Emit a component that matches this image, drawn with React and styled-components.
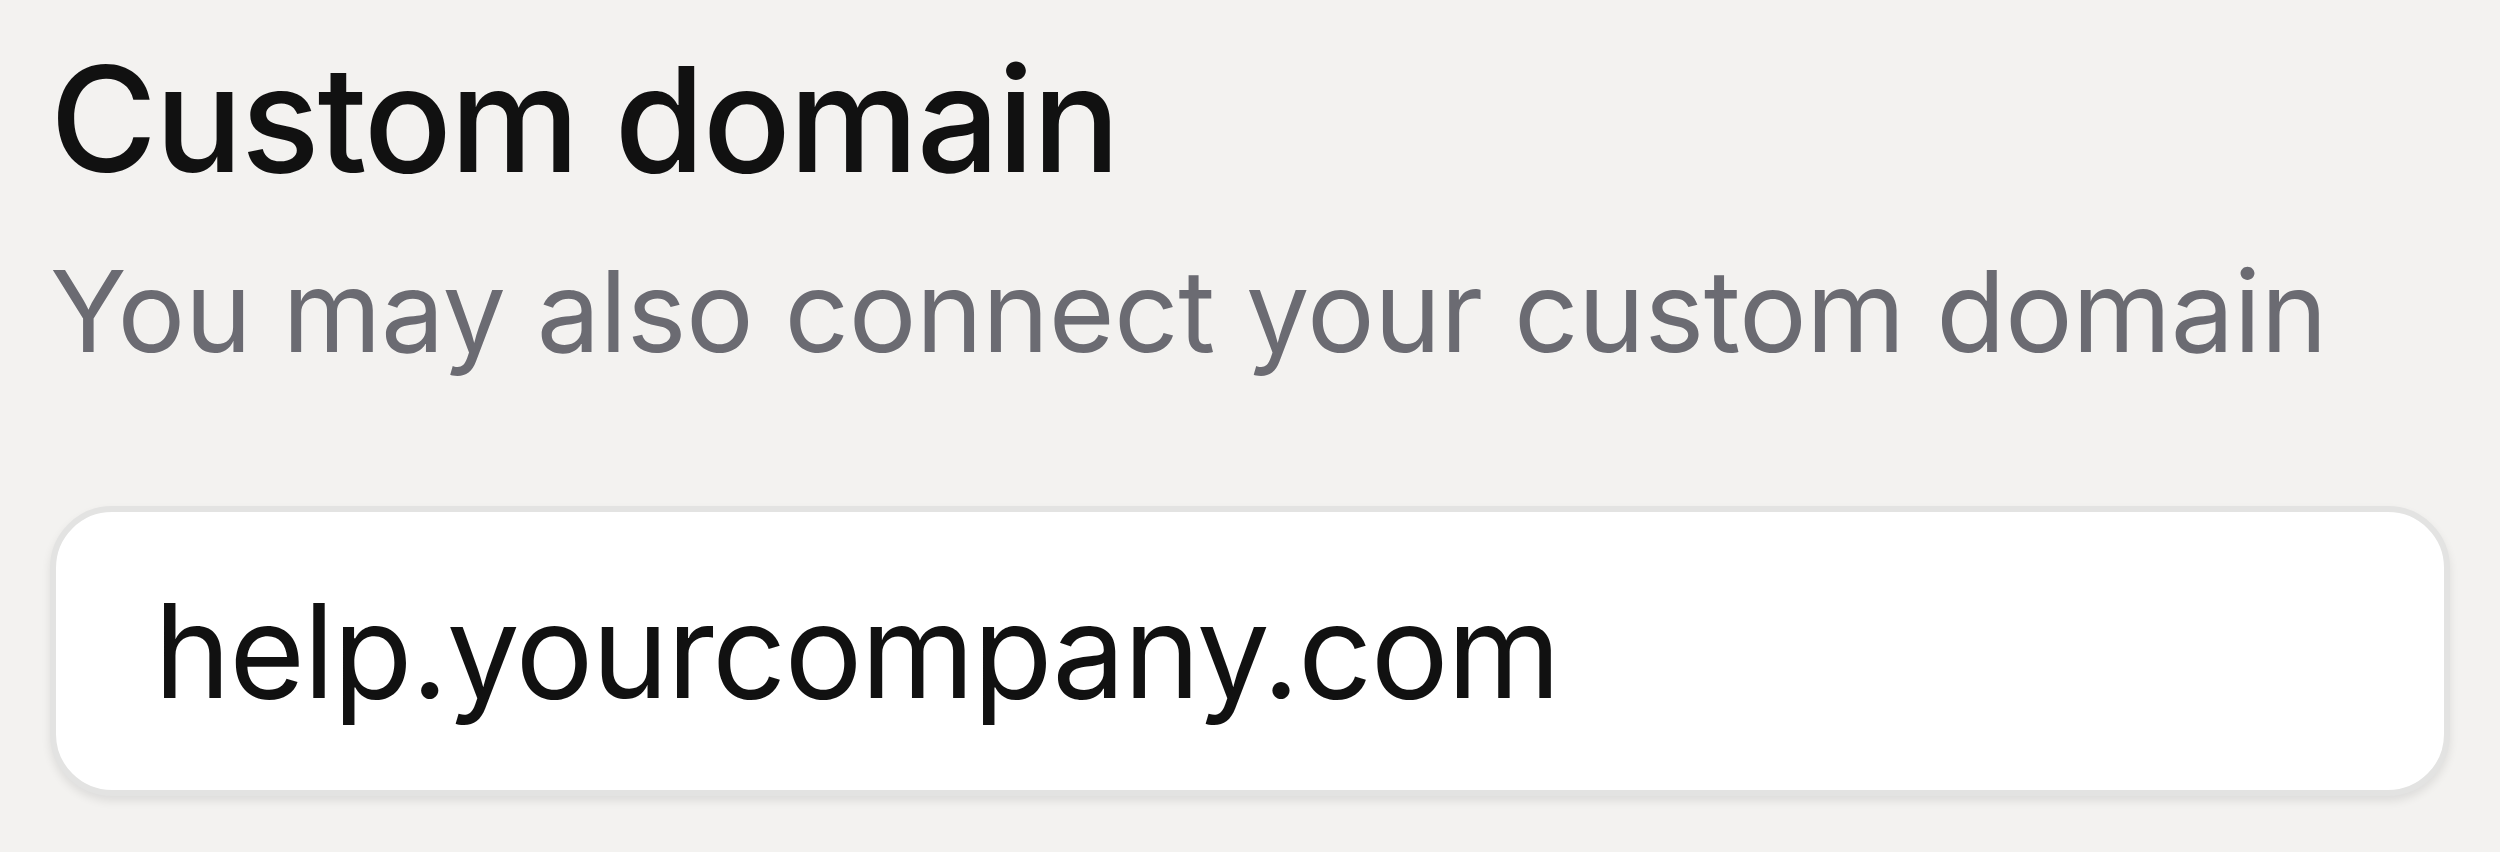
import React from 'react'
import styled, { createGlobalStyle } from 'styled-components'

const GlobalStyle = createGlobalStyle`
  html, body {
    margin: 0;
    padding: 0;
    background: #f3f2f0;
  }
  body {
    font-family: Inter, "Noto Sans", "Liberation Sans", sans-serif;
  }
`

const Page = styled.div`
  display: flex;
  flex-direction: column;
  padding: 46px 50px 0 50px;
  width: 2500px;
  height: 852px;
  box-sizing: border-box;
`

const Title = styled.h1`
  margin: 0;
  font-size: 146px;
  line-height: 146px;
  font-weight: 500;
  color: #111111;
  letter-spacing: -2px;
`

const Subtitle = styled.p`
  margin: 63px 0 0 0;
  font-size: 113px;
  line-height: 113px;
  font-weight: 400;
  color: #6b6b72;
  letter-spacing: -0.45px;
`

const Field = styled.div`
  margin-top: 138px;
  display: flex;
  align-items: center;
  height: 278px;
  padding: 0 0 0 98px;
  background: #ffffff;
  border: 6px solid #e3e3e2;
  border-radius: 62px;
  box-shadow: 0 5px 10px rgba(0, 0, 0, 0.09);
`

const Value = styled.span`
  font-size: 130px;
  line-height: 130px;
  color: #111111;
  letter-spacing: -1.7px;
`

export default function App() {
  return (
    <>
      <GlobalStyle />
      <Page>
        <Title>Custom domain</Title>
        <Subtitle>You may also connect your custom domain</Subtitle>
        <Field>
          <Value>help.yourcompany.com</Value>
        </Field>
      </Page>
    </>
  )
}
